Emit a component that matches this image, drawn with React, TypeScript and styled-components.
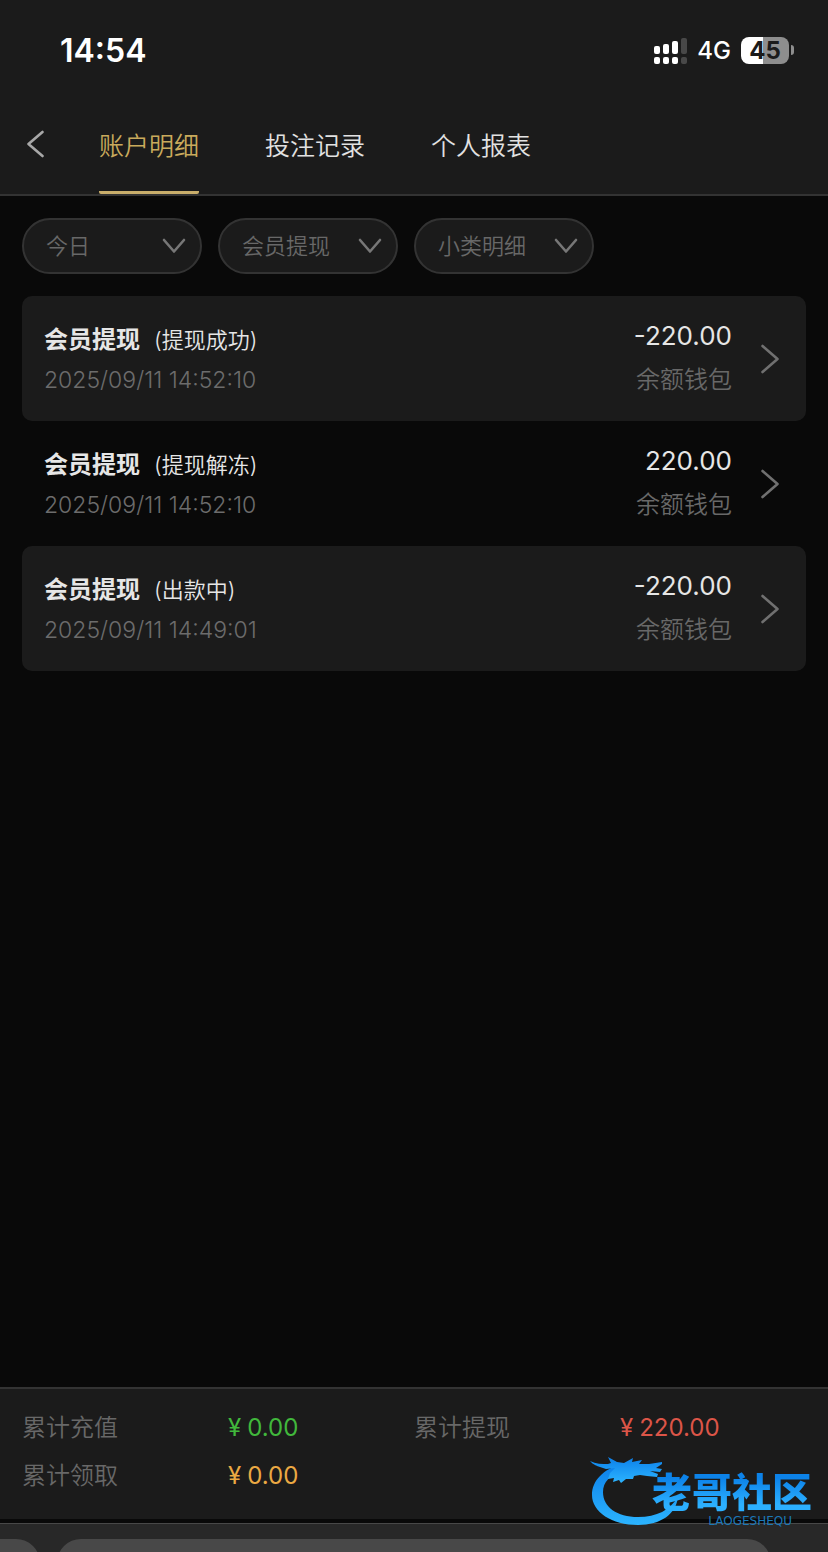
import React from "react";
import styled, { createGlobalStyle } from "styled-components";

const GlobalStyle = createGlobalStyle`
  *, *::before, *::after { box-sizing: border-box; }
  body {
    margin: 0;
    background: #090909;
    font-family: Inter, "Noto Sans CJK SC", sans-serif;
    -webkit-font-smoothing: antialiased;
  }
  button, select { font: inherit; color: inherit; }
`;

const Screen = styled.div`
  position: relative;
  display: flex;
  flex-direction: column;
  min-height: 100vh;
  background: #090909;
  color: #e6e6e6;
`;

const Header = styled.header`
  background: #1b1b1b;
  border-bottom: 2px solid #333;
`;

const StatusBar = styled.div`
  display: flex;
  align-items: center;
  justify-content: space-between;
  height: 100px;
  padding: 0 34px 0 60px;
  color: #fff;
`;

const Clock = styled.time`
  padding-top: 2px;
  font-size: 32px;
  font-weight: 600;
  line-height: 40px;
`;

const StatusIcons = styled.div`
  display: flex;
  align-items: center;
  gap: 10px;
`;

const Network = styled.span`
  padding-top: 2px;
  font-size: 24px;
  font-weight: 500;
  line-height: 28px;
`;

const Battery = styled.div`
  display: flex;
  align-items: center;
  gap: 2px;
`;

const BatteryBody = styled.div`
  width: 48px;
  height: 27px;
  border-radius: 8px;
  background: linear-gradient(90deg, #fff 46%, #8e8e8e 46%);
  color: #1b1b1b;
  font-size: 24px;
  font-weight: 700;
  line-height: 27px;
  text-align: center;
`;

const BatteryTip = styled.div`
  width: 3px;
  height: 10px;
  border-radius: 0 3px 3px 0;
  background: #8e8e8e;
`;

const Nav = styled.nav`
  display: flex;
  height: 94px;
`;

const BackButton = styled.button`
  display: flex;
  align-items: center;
  width: 99px;
  padding: 0 0 6px 26px;
  border: 0;
  background: none;
  color: #a8a8a8;
`;

const Tabs = styled.div`
  display: flex;
  gap: 66px;
`;

const Tab = styled.button<{ $active?: boolean }>`
  padding: 0;
  border: 0;
  border-bottom: 3px solid ${(p) => (p.$active ? "#c9ae6b" : "transparent")};
  border-radius: 2px;
  background: none;
  color: ${(p) => (p.$active ? "#c9aa5c" : "#e2e2e2")};
  font-size: 25px;
  font-weight: 350;
  line-height: 32px;
`;

const Main = styled.main`
  flex: 1;
  padding: 22px;
`;

const Filters = styled.form`
  display: flex;
  gap: 16px;
  margin-bottom: 22px;
`;

const FilterBox = styled.label`
  position: relative;
  display: block;
  width: 180px;
  color: #777;

  svg {
    position: absolute;
    top: 20px;
    right: 16px;
    pointer-events: none;
  }
`;

const FilterSelect = styled.select`
  width: 100%;
  height: 56px;
  padding: 0 44px 0 22px;
  border: 2px solid #333;
  border-radius: 28px;
  appearance: none;
  background: #1b1b1b;
  color: #686868;
  font-size: 22px;
  font-weight: 350;
  outline: none;
`;

const Records = styled.ul`
  margin: 0;
  padding: 0;
  list-style: none;
`;

const Record = styled.li`
  border-radius: 10px;

  &:nth-child(odd) { background: #1b1b1b; }
`;

const RecordButton = styled.button`
  display: flex;
  align-items: center;
  width: 100%;
  height: 125px;
  padding: 0 26px 0 22px;
  border: 0;
  background: none;
  text-align: left;
`;

const Details = styled.span`
  display: flex;
  flex: 1;
  flex-direction: column;
  gap: 8px;
  padding-top: 2px;
`;

const Title = styled.span`
  display: flex;
  align-items: center;
  gap: 14px;
  font-size: 22px;
  font-weight: 350;
  line-height: 32px;
`;

const Kind = styled.strong`
  font-size: 24px;
  font-weight: 700;
`;

const Stamp = styled.time`
  color: #6c6c6c;
  font-size: 23px;
  font-weight: 350;
  line-height: 32px;
`;

const Sum = styled.span`
  display: flex;
  flex-direction: column;
  gap: 12px;
  margin-right: 28px;
  padding-bottom: 2px;
  text-align: right;
`;

const Amount = styled.span`
  font-size: 26px;
  font-weight: 400;
  line-height: 32px;
`;

const Wallet = styled.span`
  color: #686868;
  font-size: 24px;
  font-weight: 350;
  line-height: 32px;
`;

const Totals = styled.dl`
  display: grid;
  grid-template-columns: 1fr 1fr;
  align-content: start;
  row-gap: 16px;
  margin: 0;
  padding: 23px 22px 27px;
  border-top: 2px solid #333;
  background: #1b1b1b;
`;

const Total = styled.div`
  display: grid;
  grid-template-columns: 206px 1fr;
  font-size: 24px;
  line-height: 32px;
`;

const TotalLabel = styled.dt`
  color: #686868;
  font-weight: 350;
`;

const TotalValue = styled.dd<{ $color: string }>`
  display: flex;
  gap: 6px;
  margin: 0;
  color: ${(p) => p.$color};
  font-weight: 400;
`;

const BrowserBar = styled.div`
  display: flex;
  gap: 17px;
  height: 29px;
  margin-top: 4px;
  padding: 15px 57px 0 0;
  overflow: hidden;
  border-top: 1px solid #484848;
  background: #282828;
`;

const AddressPill = styled.div<{ $side?: boolean }>`
  flex: ${(p) => (p.$side ? "0 0 40px" : "1")};
  height: 60px;
  border-radius: ${(p) => (p.$side ? "0 24px 24px 0" : "24px")};
  background: #484848;
`;

const Brand = styled.div`
  position: absolute;
  right: 14px;
  bottom: 24px;
  width: 226px;
  height: 76px;
`;

const BrandMark = styled.svg`
  position: absolute;
  inset: 0;
`;

const BrandText = styled.div`
  position: absolute;
  top: 14px;
  right: 2px;
  display: flex;
  flex-direction: column;
  align-items: flex-end;
`;

const BrandName = styled.span`
  background: linear-gradient(#0c82e8 25%, #2cb0ff 80%);
  background-clip: text;
  color: transparent;
  font-family: "Noto Sans CJK SC", sans-serif;
  font-size: 40px;
  font-weight: 900;
  line-height: 48px;
`;

const BrandLatin = styled.span`
  padding-right: 20px;
  color: #1c78b8;
  font-family: "DejaVu Sans", sans-serif;
  font-size: 12px;
  line-height: 14px;
`;

const signalBars = [
  { x: 0, y: 9, h: 8, color: "#fff" },
  { x: 9, y: 7, h: 10, color: "#fff" },
  { x: 18, y: 4, h: 13, color: "#fff" },
  { x: 27, y: 1, h: 16, color: "#484848" },
];

const Signal = () => (
  <svg width="33" height="27" viewBox="0 0 33 27" aria-hidden="true">
    {signalBars.map((b) => (
      <g key={b.x} fill={b.color}>
        <rect x={b.x} y={b.y} width="6" height={b.h} rx="2" />
        <rect x={b.x} y="20" width="6" height="7" rx="2" />
      </g>
    ))}
  </svg>
);

const strokeProps = {
  fill: "none",
  stroke: "currentColor",
  strokeLinecap: "round",
  strokeLinejoin: "round",
} as const;

const ChevronLeft = () => (
  <svg width="18" height="28" viewBox="0 0 18 28" aria-hidden="true">
    <path d="M16.500 2 2.500 14l14 12" strokeWidth="2.600" {...strokeProps} />
  </svg>
);

const ChevronDown = () => (
  <svg width="24" height="16" viewBox="0 0 24 16" aria-hidden="true">
    <path d="M2 2l10 11.500L22 2" strokeWidth="2.600" {...strokeProps} />
  </svg>
);

const ChevronRight = () => (
  <svg width="20" height="30" viewBox="0 0 20 30" color="#707070" aria-hidden="true">
    <path d="M2.500 2 17.500 15l-15 13" strokeWidth="2.600" {...strokeProps} />
  </svg>
);

const Dragon = () => (
  <BrandMark width="226" height="76" viewBox="0 0 226 76" aria-hidden="true">
    <defs>
      <linearGradient id="dragon" x1="0" y1="0" x2="0" y2="1">
        <stop offset="0" stopColor="#0c80ea" />
        <stop offset="1" stopColor="#2cb4ff" />
      </linearGradient>
    </defs>
    <g fill="url(#dragon)">
      <path d="M34 12C15 17 4 29 4 43c0 17 20 30 46 30 23 0 38-11 40-28-8 13-21 20-40 20-21 0-35-10-35-25 0-10 7-17 20-22z" />
      <path d="M2 9c6 3 12 3 18 3l3-1-3-6 9 5 7 1 9-5-1 4 10-2-3 4 10 0 13-2 0 2-6 4 6 1-2 3-10-1 8 3-1 3-10-1-7-1-6 1-1 3-7 0-5 4-2-3-6 2 1-4-6 1 2-6 5-5-9 1-9-3C10 14 5 13 2 9z" />
    </g>
  </BrandMark>
);

const filters = [
  { label: "日期", value: "今日" },
  { label: "类型", value: "会员提现" },
  { label: "小类", value: "小类明细" },
];

const records = [
  { status: "提现成功", time: "2025/09/11 14:52:10", amount: "-220.00" },
  { status: "提现解冻", time: "2025/09/11 14:52:10", amount: "220.00" },
  { status: "出款中", time: "2025/09/11 14:49:01", amount: "-220.00" },
];

const totals = [
  { label: "累计充值", value: "0.00", color: "#41b83c" },
  { label: "累计提现", value: "220.00", color: "#dc5548" },
  { label: "累计领取", value: "0.00", color: "#eba943" },
];

export default function App() {
  return (
    <Screen>
      <GlobalStyle />
      <Header>
        <StatusBar>
          <Clock>14:54</Clock>
          <StatusIcons>
            <Signal />
            <Network>4G</Network>
            <Battery>
              <BatteryBody>45</BatteryBody>
              <BatteryTip />
            </Battery>
          </StatusIcons>
        </StatusBar>
        <Nav>
          <BackButton type="button" aria-label="返回">
            <ChevronLeft />
          </BackButton>
          <Tabs>
            <Tab type="button" $active>账户明细</Tab>
            <Tab type="button">投注记录</Tab>
            <Tab type="button">个人报表</Tab>
          </Tabs>
        </Nav>
      </Header>

      <Main>
        <Filters>
          {filters.map((f) => (
            <FilterBox key={f.label}>
              <FilterSelect aria-label={f.label} defaultValue={f.value}>
                <option>{f.value}</option>
              </FilterSelect>
              <ChevronDown />
            </FilterBox>
          ))}
        </Filters>
        <Records>
          {records.map((r) => (
            <Record key={r.status}>
              <RecordButton type="button">
                <Details>
                  <Title>
                    <Kind>会员提现</Kind>
                    <span>({r.status})</span>
                  </Title>
                  <Stamp>{r.time}</Stamp>
                </Details>
                <Sum>
                  <Amount>{r.amount}</Amount>
                  <Wallet>余额钱包</Wallet>
                </Sum>
                <ChevronRight />
              </RecordButton>
            </Record>
          ))}
        </Records>
      </Main>

      <Totals>
        {totals.map((t) => (
          <Total key={t.label}>
            <TotalLabel>{t.label}</TotalLabel>
            <TotalValue $color={t.color}>
              <span>¥</span>
              <span>{t.value}</span>
            </TotalValue>
          </Total>
        ))}
      </Totals>
      <BrowserBar>
        <AddressPill $side />
        <AddressPill />
      </BrowserBar>

      <Brand>
        <Dragon />
        <BrandText>
          <BrandName>老哥社区</BrandName>
          <BrandLatin>LAOGESHEQU</BrandLatin>
        </BrandText>
      </Brand>
    </Screen>
  );
}
